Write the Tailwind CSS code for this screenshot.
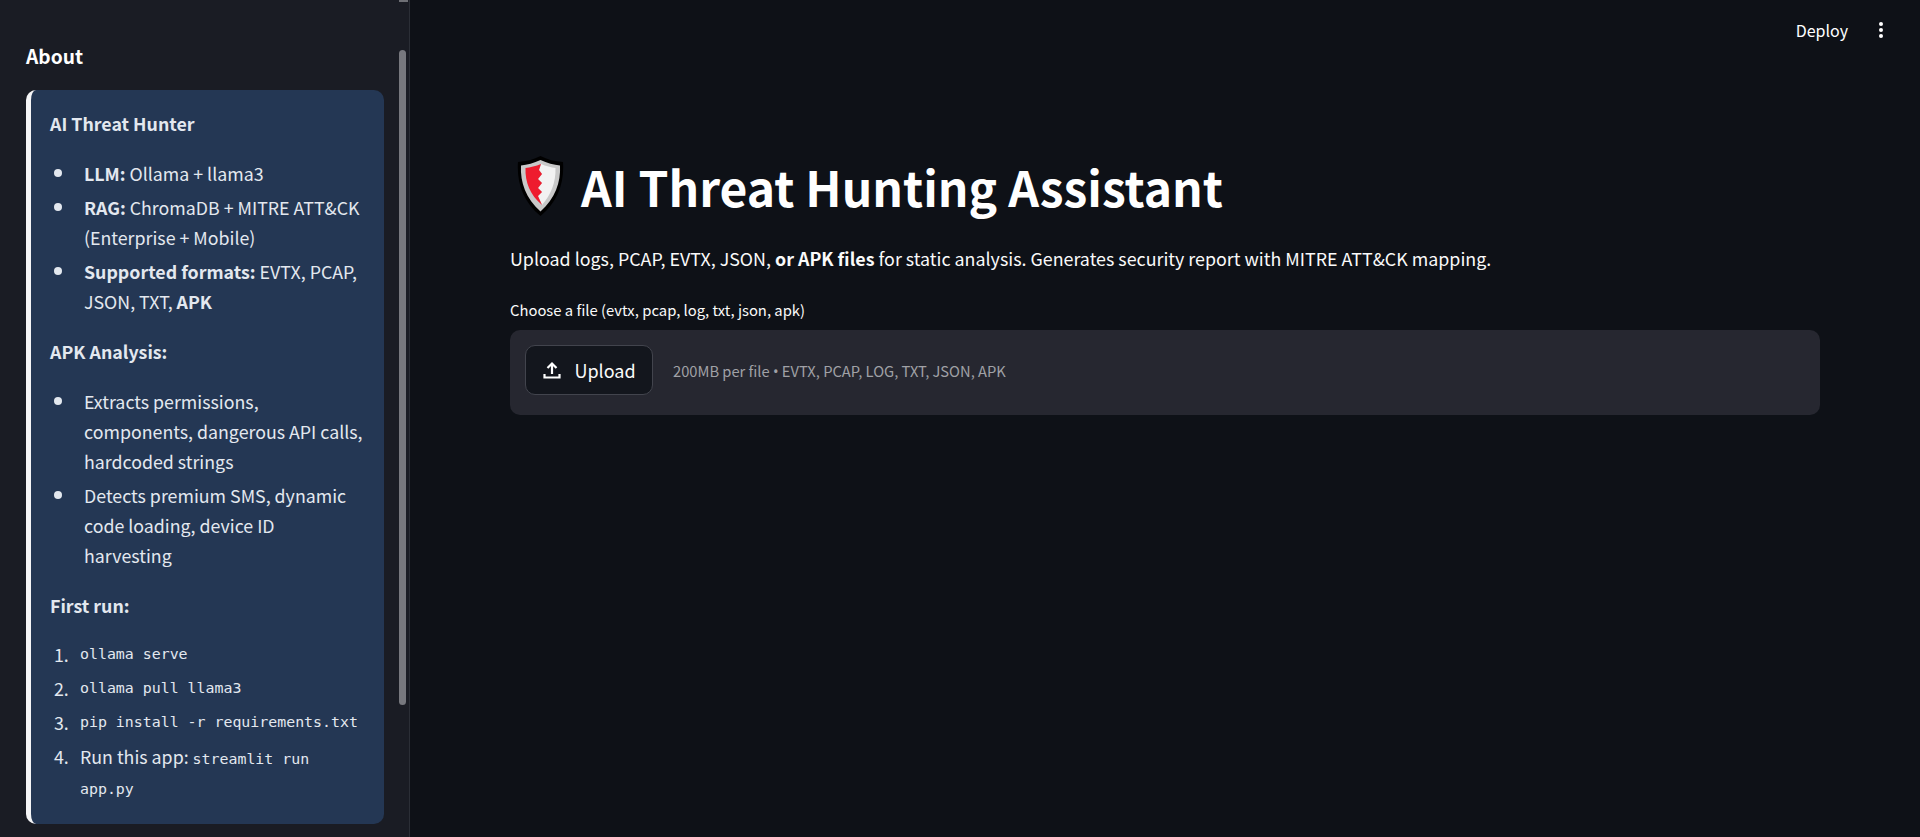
<!DOCTYPE html>
<html lang="en">
<head>
    <meta charset="UTF-8">
    <meta name="viewport" content="width=device-width, initial-scale=1.0">
    <title>AI Threat Hunting Assistant</title>
    <script src="https://cdn.jsdelivr.net/npm/@tailwindcss/browser@4"></script>
</head>
<body class="h-[837px] overflow-hidden bg-[#0e1117] font-['Noto_Sans_CJK_SC','Source_Sans_Pro',sans-serif] text-[#fafafa]">
<div class="flex h-[837px]">

    <!-- sidebar -->
    <aside class="relative w-[410px] shrink-0 overflow-hidden border-r border-[#2b2e36] bg-[#1a1c24]">
        <div class="absolute right-[1px] top-0 h-[2px] w-[9px] bg-[#6e6f75]"></div>
        <div class="absolute right-[3px] top-[50px] h-[655px] w-[7px] rounded-full bg-[#77787e]"></div>

        <div class="px-[26px] pt-[42px]">
            <h2 class="text-[19.2px] font-semibold leading-[28px] text-white">About</h2>

            <div class="mt-[20px] h-[734px] w-[358px] rounded-[10px] border-l-[5px] border-[#f5f5f7] bg-[#243754] pl-[19px] pr-[20px] pt-[18px] text-[17.8px] leading-[30px] text-[#e3e8ef]">
                <p class="font-semibold">AI Threat Hunter</p>

                <ul class="mt-[20px]">
                    <li class="flex">
                        <span class="ml-[4px] mr-[22px] mt-[11px] size-[8px] shrink-0 rounded-full bg-[#e3e8ef]"></span>
                        <div><b class="font-semibold">LLM:</b> Ollama + llama3</div>
                    </li>
                    <li class="mt-[4px] flex">
                        <span class="ml-[4px] mr-[22px] mt-[11px] size-[8px] shrink-0 rounded-full bg-[#e3e8ef]"></span>
                        <div><b class="font-semibold">RAG:</b> ChromaDB + MITRE ATT&amp;CK (Enterprise + Mobile)</div>
                    </li>
                    <li class="mt-[4px] flex">
                        <span class="ml-[4px] mr-[22px] mt-[11px] size-[8px] shrink-0 rounded-full bg-[#e3e8ef]"></span>
                        <div><b class="font-semibold">Supported formats:</b> EVTX, PCAP, JSON, TXT, <b class="font-semibold">APK</b></div>
                    </li>
                </ul>

                <p class="mt-[20px] font-semibold">APK Analysis:</p>

                <ul class="mt-[20px]">
                    <li class="flex">
                        <span class="ml-[4px] mr-[22px] mt-[11px] size-[8px] shrink-0 rounded-full bg-[#e3e8ef]"></span>
                        <div>Extracts permissions, components, dangerous API calls, hardcoded strings</div>
                    </li>
                    <li class="mt-[4px] flex">
                        <span class="ml-[4px] mr-[22px] mt-[11px] size-[8px] shrink-0 rounded-full bg-[#e3e8ef]"></span>
                        <div>Detects premium SMS, dynamic code loading, device ID harvesting</div>
                    </li>
                </ul>

                <p class="mt-[20px] font-semibold">First run:</p>

                <ol class="mt-[19px]">
                    <li class="flex">
                        <span class="w-[30px] shrink-0 pl-[4px]">1.</span>
                        <code class="font-['DejaVu_Sans_Mono',monospace] text-[14.9px]">ollama serve</code>
                    </li>
                    <li class="mt-[4px] flex">
                        <span class="w-[30px] shrink-0 pl-[4px]">2.</span>
                        <code class="font-['DejaVu_Sans_Mono',monospace] text-[14.9px]">ollama pull llama3</code>
                    </li>
                    <li class="mt-[4px] flex">
                        <span class="w-[30px] shrink-0 pl-[4px]">3.</span>
                        <code class="font-['DejaVu_Sans_Mono',monospace] text-[14.9px]">pip install -r requirements.txt</code>
                    </li>
                    <li class="mt-[4px] flex">
                        <span class="w-[30px] shrink-0 pl-[4px]">4.</span>
                        <div>Run this app: <code class="font-['DejaVu_Sans_Mono',monospace] text-[14.9px] leading-none">streamlit run app.py</code></div>
                    </li>
                </ol>
            </div>
        </div>
    </aside>

    <!-- main -->
    <main class="min-w-0 flex-1">
        <header class="flex h-[59px] items-center justify-end">
            <span class="text-[16px] leading-[20px] text-white">Deploy</span>
            <svg class="ml-[30px] mr-[36px] h-[18px] w-[6px]" viewBox="0 0 6 18" fill="#ffffff">
                <circle cx="3" cy="3" r="2"/>
                <circle cx="3" cy="9" r="2"/>
                <circle cx="3" cy="15" r="2"/>
            </svg>
        </header>

        <div class="ml-[100px] w-[1310px] pt-[97px]">
            <div class="flex h-[60px] items-center">
                <svg class="ml-[7px] mr-[17px] h-[60px] w-[47px] shrink-0" viewBox="0 0 47 60">
                    <path d="M23.500 0 C30 3.500 38 5.500 46 6 C47.500 26 41 46 23.500 60 C6 46 -.5 26 1 6 C9 5.500 17 3.500 23.500 0Z" fill="#000000"/>
                    <path d="M23.500 4 C30 7 37 9 43 9.500 C44 26 38 43 23.500 55.500 C9 43 3 26 4 9.500 C10 9 17 7 23.500 4Z" fill="#c8c8c8"/>
                    <path d="M24 8 C29 10 34 11.500 38.500 12 C39 26 34 39 25 49 L21 40 L25 36 L21 32 L25 27 L21 23 L25 18 L22 14Z" fill="#f2f2f2"/>
                    <path d="M24 8 C19 10 13 11.500 8.500 12 C8 26 13 39 25 49 L21 40 L25 36 L21 32 L25 27 L21 23 L25 18 L22 14Z" fill="#ee1c2e"/>
                </svg>
                <h1 class="text-[48px] font-bold leading-[60px] text-white">AI Threat Hunting Assistant</h1>
            </div>

            <p class="mt-[27px] text-[17.85px] leading-[30px] text-[#fafafa]">Upload logs, PCAP, EVTX, JSON, <b class="font-semibold">or APK files</b> for static analysis. Generates security report with MITRE ATT&amp;CK mapping.</p>

            <label class="mt-[25px] block text-[14.8px] leading-[24px] text-[#fafafa]">Choose a file (evtx, pcap, log, txt, json, apk)</label>

            <div class="mt-[8px] flex h-[85px] items-start rounded-[10px] bg-[#262730] pl-[15px] pt-[15px]">
                <button class="flex h-[50px] w-[128px] items-center justify-center rounded-[10px] border border-[#42444d] bg-[#13161d] text-[18px] text-[#fafafa]">
                    <svg class="mr-[12px] h-[20px] w-[20px]" viewBox="0 0 20 20" fill="none" stroke="#ffffff" stroke-width="2.200">
                        <path d="M10 14V4"/>
                        <path d="M5.500 8 10 3.500 14.500 8"/>
                        <path d="M2.500 14v3.500h15V14"/>
                    </svg>
                    Upload
                </button>
                <span class="ml-[20px] mt-[14px] text-[14.7px] leading-[24px] text-[#a0a1a6]">200MB per file <span class="font-['Noto_Sans']">•</span> EVTX, PCAP, LOG, TXT, JSON, APK</span>
            </div>
        </div>
    </main>
</div>
</body>
</html>
